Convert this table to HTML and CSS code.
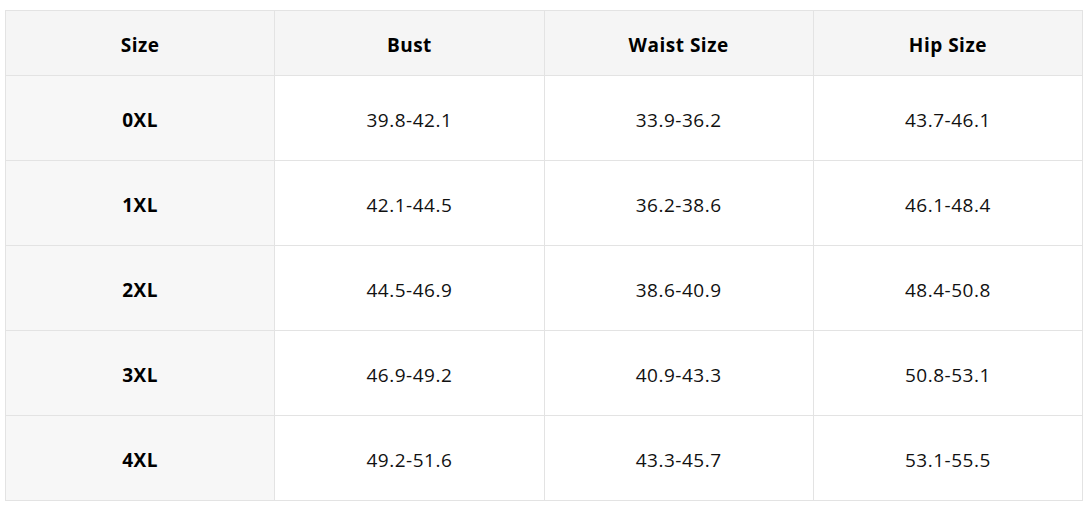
FILE: index.html
```html
<!DOCTYPE html>
<html>
<head>
<meta charset="utf-8">
<link rel="stylesheet" href="styles.css">
</head>
<body>
<table class="size-table">
  <thead>
    <tr><th>Size</th><th>Bust</th><th>Waist Size</th><th>Hip Size</th></tr>
  </thead>
  <tbody>
    <tr><td class="size">0XL</td><td>39.8-42.1</td><td>33.9-36.2</td><td>43.7-46.1</td></tr>
    <tr><td class="size">1XL</td><td>42.1-44.5</td><td>36.2-38.6</td><td>46.1-48.4</td></tr>
    <tr><td class="size">2XL</td><td>44.5-46.9</td><td>38.6-40.9</td><td>48.4-50.8</td></tr>
    <tr><td class="size">3XL</td><td>46.9-49.2</td><td>40.9-43.3</td><td>50.8-53.1</td></tr>
    <tr><td class="size">4XL</td><td>49.2-51.6</td><td>43.3-45.7</td><td>53.1-55.5</td></tr>
  </tbody>
</table>
</body>
</html>
```
FILE: styles.css
```css
html, body { margin: 0; background: #fff; }
body { padding: 10px 5px; font-family: "Open Sans", "Noto Sans", sans-serif; color: #111; }
.size-table { width: 1078px; border-collapse: collapse; table-layout: fixed; }
.size-table th, .size-table td { border: 1px solid #e3e3e3; text-align: center; font-size: 19px; letter-spacing: 0.5px; }
.size-table th { height: 60px; padding: 4px 0 0; background: #f5f5f5; font-weight: 700; color: #000; }
.size-table td { height: 80px; padding: 4px 0 0; }
.size-table td.size { background: #f7f7f7; font-weight: 700; color: #000; }
```
